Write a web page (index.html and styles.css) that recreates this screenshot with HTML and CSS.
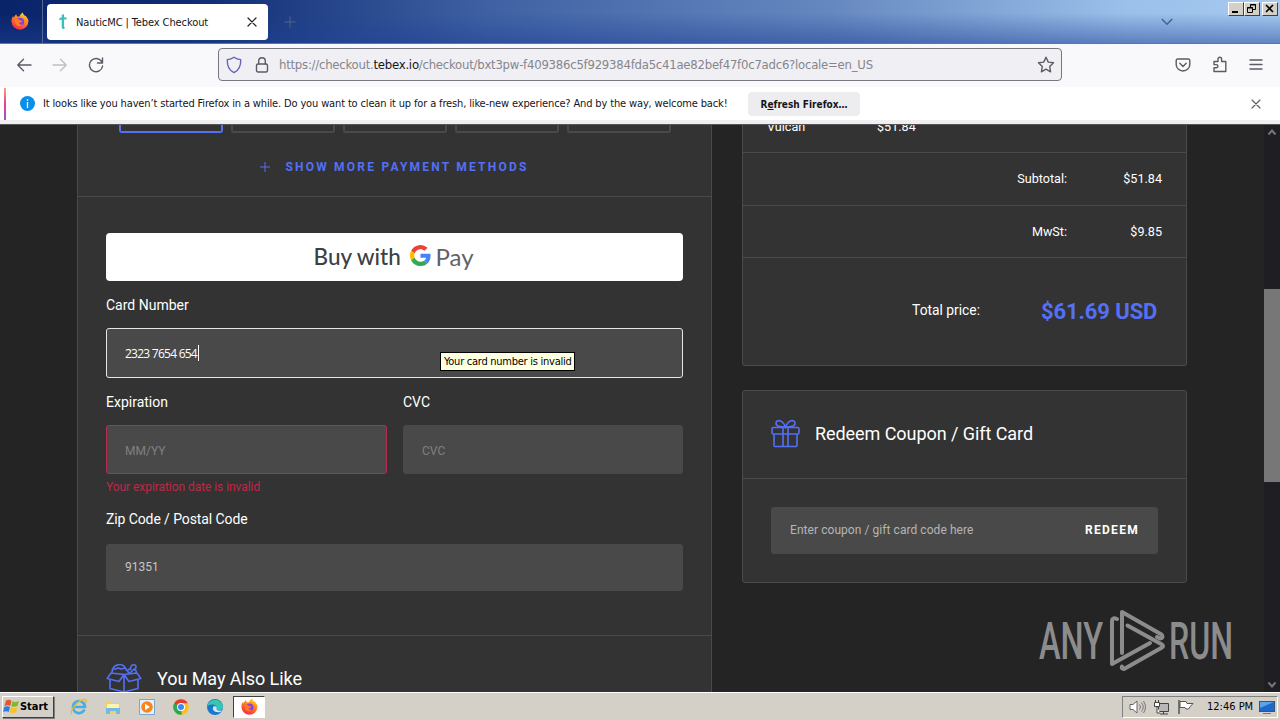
FILE: index.html
```html
<!DOCTYPE html>
<html lang="en">
<head>
<meta charset="utf-8">
<title>NauticMC | Tebex Checkout</title>
<link rel="stylesheet" href="styles.css">
</head>
<body>
<svg width="0" height="0" class="defs">
  <defs>
    <linearGradient id="flame" x1="0.8" y1="0" x2="0.3" y2="1"><stop offset="0" stop-color="#ffe226"/><stop offset=".4" stop-color="#ff8a1e"/><stop offset="1" stop-color="#f5264e"/></linearGradient>
    <symbol id="firefox" viewBox="0 0 16 16">
      <path fill="url(#flame)" d="M8 15.700a7.500 7.500 0 0 1-7.600-7.200C.3 6.500 1 4.800 2 3.600c0 .7.2 1.200.5 1.600.5-1.600 1.500-2.700 2.300-3.300 0 .8.300 1.500.7 2h2c.8-1.700 1.700-2.900 3.100-3.500 0 1.300.7 2 1.700 2.900 1.100 0 1.800 1.300 1.900 2 .7 0 1.300 1.500 1.300 3.200A7.500 7.500 0 0 1 8 15.700Z"/>
      <circle cx="8.200" cy="8.700" r="3.500" fill="#8a3fe0"/>
      <path fill="#ff7a22" d="M3.400 6.300c1.600-.5 3 0 4.100.9 1 .7 1.800.6 2.600.5-.5 1.500-2.200 1.500-2.800 2.200-.5.600 1 1.700 2.900.7-1 2.200-4.500 2.500-6 .2-.9-1.400-1-3-.8-4.500Z"/>
    </symbol>
  </defs>
</svg>

<div class="tabbar">
  <div class="pinned"><svg width="18" height="18"><use href="#firefox"/></svg></div>
  <div class="tab">
    <svg class="favicon" width="10" height="16" viewBox="0 0 10 16"><path d="M3.700 1 6 0v3.200L8.500 3.400v2L6 5.500V12c0 1 .5 1.300 1.300 1.200L5.800 15c-1.500 0-2.100-.7-2.100-2.300v-7L1 6l.8-2.200 1.900-.3Z" fill="#35c3b9"/></svg>
    <span class="tab-title">NauticMC | Tebex Checkout</span>
    <svg width="10" height="10" viewBox="0 0 10 10" class="ln dark"><path d="m1 1 8 8M9 1 1 9"/></svg>
  </div>
  <svg class="newtab" width="12" height="12" viewBox="0 0 12 12"><path d="M6 .5v11M.5 6h11"/></svg>
  <svg class="alltabs" width="12" height="8" viewBox="0 0 12 8"><path d="m.8 1 5.200 5.200L11.200 1"/></svg>
  <div class="winbtns">
    <span class="wb"><svg width="13" height="11" viewBox="0 0 13 11"><path d="M3 9h6" stroke="#000" stroke-width="2"/></svg></span>
    <span class="wb"><svg width="13" height="11" viewBox="0 0 13 11"><path d="M5.500 4V1.500h5v5H8M5 2h6M2.500 4.500h5v5h-5zM2 5h6" fill="none" stroke="#000"/></svg></span>
    <span class="wb last"><svg width="13" height="11" viewBox="0 0 13 11"><path d="m3 2 7 7M10 2 3 9" stroke="#000" stroke-width="1.600"/></svg></span>
  </div>
</div>

<div class="toolbar">
  <div class="nav">
    <svg width="16" height="16" viewBox="0 0 16 16" class="ln"><path d="M15 8H2M7.500 2.300 1.800 8l5.700 5.700"/></svg>
    <svg width="16" height="16" viewBox="0 0 16 16" class="ln faded"><path d="M1 8h13M8.500 2.300 14.200 8l-5.700 5.700"/></svg>
    <svg width="16" height="16" viewBox="0 0 16 16" class="ln"><path d="M13.600 4.500A6.600 6.600 0 1 0 14.600 9M14.500 1v5h-5"/></svg>
  </div>
  <div class="urlbar">
    <svg width="16" height="18" viewBox="0 0 16 18" class="ln shield"><path d="M8 1.200c2 1.500 4.200 2.200 6.700 2.400C15 9.500 13 14.200 8 16.700 3 14.200 1 9.500 1.300 3.600 3.800 3.400 6 2.700 8 1.200Z"/></svg>
    <svg class="ln lock" width="14" height="18" viewBox="0 0 14 18"><rect x="1.500" y="8" width="11" height="8" rx="1.500"/><path d="M3.700 8V5a3.300 3.300 0 0 1 6.600 0v3"/></svg>
    <span class="url">https://checkout.<b>tebex.io</b>/checkout/bxt3pw-f409386c5f929384fda5c41ae82bef47f0c7adc6?locale=en_US</span>
    <svg width="18" height="17" viewBox="0 0 18 17" class="ln star"><path d="m9 1.200 2.300 4.900 5.200.7-3.800 3.700.9 5.300L9 13.200l-4.600 2.600.9-5.300L1.500 6.800l5.200-.7Z"/></svg>
  </div>
  <div class="tools">
    <svg width="16" height="16" viewBox="0 0 16 16" class="ln"><path d="M2.500 2h11a1.300 1.300 0 0 1 1.300 1.300V7.500a6.800 6.500 0 0 1-13.600 0V3.300A1.300 1.300 0 0 1 2.500 2ZM4.800 6.300 8 9.400l3.200-3.100"/></svg>
    <svg width="16" height="17" viewBox="0 0 16 17" class="ln"><path d="M2 5.500h4V3a1.800 1.800 0 0 1 3.600 0v2.500h4.200v10H2v-3.700h2.300a1.500 1.500 0 0 0 0-3.200H2Z"/></svg>
    <svg width="14" height="14" viewBox="0 0 14 14" class="ln"><path d="M1 2h12M1 6.500h12M1 11h12"/></svg>
  </div>
</div>

<div class="notice">
  <span class="stripe"></span>
  <svg width="15" height="15" viewBox="0 0 15 15"><circle cx="7.500" cy="7.500" r="7.500" fill="#0a8fe8"/><path d="M7.500 3.200v1.600M7.500 6v6" stroke="#fff" stroke-width="1.300"/></svg>
  <span class="notice-text">It looks like you haven’t started Firefox in a while. Do you want to clean it up for a fresh, like-new experience? And by the way, welcome back!</span>
  <span class="refresh">R<u>e</u>fresh Firefox…</span>
  <svg class="ln notice-x" width="10" height="10" viewBox="0 0 10 10"><path d="m1 1 8 8M9 1 1 9"/></svg>
</div>

<div class="page">
  <main class="card checkout">
    <div class="methods"><i class="on"></i><i></i><i></i><i></i><i></i></div>
    <div class="more"><svg width="10" height="10" viewBox="0 0 10 10"><path d="M5 0v10M0 5h10" stroke="#5470f5"/></svg><span>SHOW MORE PAYMENT METHODS</span></div>
    <section class="form">
      <div class="gpay">
        <span class="buy">Buy with</span>
        <svg width="21" height="21" viewBox="0 0 48 48"><path fill="#ea4335" d="M24 9.500c3.500 0 6.700 1.200 9.200 3.600l6.900-6.900A24 24 0 0 0 2.600 13.200l8 6.200C12.400 13.700 17.700 9.500 24 9.500Z"/><path fill="#4285f4" d="M47 24.500c0-1.600-.2-3-.4-4.500H24v9h12.900a11 11 0 0 1-4.700 7.200l7.700 6C44.400 38 47 32 47 24.500Z"/><path fill="#fbbc05" d="M10.500 28.600a14 14 0 0 1 0-9.200l-8-6.200a24 24 0 0 0 0 21.600Z"/><path fill="#34a853" d="M24 48c6.500 0 12-2.100 15.900-5.800l-7.700-6c-2.200 1.500-4.900 2.300-8.200 2.300-6.300 0-11.600-4.200-13.500-9.900l-8 6.200A24 24 0 0 0 24 48Z"/></svg>
        <span class="pay">Pay</span>
      </div>
      <label class="l1"><span>Card Number</span></label>
      <div class="input focus"><span class="num">2323 7654 654</span><i class="caret"></i></div>
      <div class="pair">
        <div><label><span>Expiration</span></label><div class="input error"><span class="ph1">MM/YY</span></div></div>
        <div><label><span>CVC</span></label><div class="input"><span class="ph2">CVC</span></div></div>
      </div>
      <p class="errmsg"><span>Your expiration date is invalid</span></p>
      <label class="l2"><span>Zip Code / Postal Code</span></label>
      <div class="input zip"><span>91351</span></div>
    </section>
    <section class="also">
      <svg width="36" height="32" viewBox="0 0 36 32"><g fill="none" stroke="#5470f5" stroke-width="1.600" stroke-linejoin="round"><path d="M5 10 1.200 15.500 13 18.500l5-7 5 7 11.800-3L31 10l-13 1.500ZM18 12v17M4 17v8.500L18 29l14-3.500V17"/><path d="M6 9.500C6 4 10 1.500 14 1.500c3 0 6 2.500 6.500 6.500M8 6.500l4-1.500 3 1 4-1M23 10.500c-2.500-3-1-5 1.500-4C24 3 26.500 1 29 2c2 1.500 1 4.500-1.500 4.500 3 0 3 2 2.500 3.500M27.500 6.500l-4 4"/></g></svg>
      <h2>You May Also Like</h2>
    </section>
  </main>

  <aside>
    <div class="card summary">
      <div class="row item"><span class="name">Vulcan</span><span class="price">$51.84</span></div>
      <div class="row"><span class="s1">Subtotal:</span><span class="amt">$51.84</span></div>
      <div class="row tax"><span class="s2">MwSt:</span><span class="amt">$9.85</span></div>
      <div class="row total"><span class="s3">Total price:</span><strong>$61.69 USD</strong></div>
    </div>
    <div class="card coupon">
      <div class="coupon-head">
        <svg width="29" height="29" viewBox="0 0 29 29"><g fill="none" stroke="#5470f5" stroke-width="1.600"><rect x="1" y="8.500" width="27" height="6.500" rx="1.200"/><path d="M3 15v11.500a1 1 0 0 0 1 1h21a1 1 0 0 0 1-1V15M12 8.500v19M17 8.500v19M14.500 8C10 8 4.500 7.500 5 4s6.500-4 9.500 4C17.500 0 23.500.5 24 4s-5 4-9.500 4Z"/></g></svg>
        <h2>Redeem Coupon / Gift Card</h2>
      </div>
      <div class="coupon-box"><span class="hint">Enter coupon / gift card code here</span><span class="redeem">REDEEM</span></div>
    </div>
  </aside>

  <div class="scrollbar">
    <svg width="10" height="7" viewBox="0 0 10 7"><path d="m1.500 5.500 3.500-4 3.500 4"/></svg>
    <i></i>
    <svg width="10" height="7" viewBox="0 0 10 7"><path d="m1.500 1.500 3.500 4 3.500-4"/></svg>
  </div>

  <div class="tooltip"><span>Your card number is invalid</span></div>
  <svg class="watermark" width="200" height="70" viewBox="0 0 200 70">
    <g fill="#8c8c8c" font-family="Roboto, sans-serif" font-weight="500" font-size="51"><text x="4" y="54" textLength="64" lengthAdjust="spacingAndGlyphs">ANY</text><text x="134" y="54" textLength="64" lengthAdjust="spacingAndGlyphs">RUN</text></g>
    <g fill="none" stroke="#8c8c8c" stroke-width="4" stroke-linecap="round" stroke-linejoin="round"><path d="M82 14q-5-2-5 2v43l38-21"/><path d="M87 48V7l39.500 22.500q2.500 3.500-1.500 4l-3-1.500"/><path d="M92.500 20.500 127 39.500q2 1.500 0 3L89 64q-3 0-2-2.500"/></g>
  </svg>
</div>

<div class="taskbar">
  <div class="start"><svg width="17" height="16" viewBox="0 0 17 16"><path d="M3 1.500q3-1.500 5.500.3L7.300 7Q4.500 5.500 1.500 7Z" fill="#e8542c"/><path d="M9.500 2.300q3 1.300 6.500-.3L14.500 7q-3 1.500-6.200.3Z" fill="#7fba2c"/><path d="M1.200 8q3-1.400 5.800 0L5.700 13q-2.500-1.500-5.500 0Z" fill="#2f7be0"/><path d="M8 8.300q3 1.500 6.300 0L13 13.300q-3 1.500-6.200 0Z" fill="#f8c320"/></svg><span>Start</span></div>
  <div class="apps">
    <svg width="18" height="18" viewBox="0 0 18 18"><path d="M14.500 11.500A6 6 0 1 1 15 9H4" fill="none" stroke="#45aee3" stroke-width="2.600"/><path d="M2 16C-1 13 9 1 15 1.500c2 .3 1.500 2.500.5 4" fill="none" stroke="#edb832" stroke-width="1.300"/></svg>
    <svg width="18" height="18" viewBox="0 0 18 18"><path d="M2 3h5l1 2h8v10H2Z" fill="#efcf68"/><path d="M3 6h12v5H3Z" fill="#fff3b0"/><path d="M2 10h14v6h-4v-3H6v3H2Z" fill="#71bce0"/></svg>
    <svg width="18" height="18" viewBox="0 0 18 18"><path d="M1.500 1.500h15v15h-15Z" fill="#e6f0f8" stroke="#79a7ce"/><circle cx="9" cy="9" r="5.800" fill="#f6861b"/><path d="m7 5.700 5 3.300-5 3.300Z" fill="#fff"/></svg>
    <svg width="18" height="18" viewBox="0 0 18 18"><circle cx="9" cy="9" r="7.800" fill="#fbc116"/><path d="M2.200 5.200A7.800 7.800 0 0 1 15.800 5.200H9L5.700 11Z" fill="#e33b2e"/><path d="M2.200 5.200 9 9l.8 7.800A7.800 7.800 0 0 1 2.200 5.200Z" fill="#2da94f"/><circle cx="9" cy="9" r="4" fill="#fff"/><circle cx="9" cy="9" r="3" fill="#4285f4"/></svg>
    <svg width="18" height="18" viewBox="0 0 18 18"><circle cx="9" cy="9" r="8" fill="#1878cf"/><path d="M1.300 8A8 8 0 0 1 17 8.500c.2 4-5 4.500-6.500 2.500 1-2-.5-4.500-4-4.500-2 0-4 .5-5.200 1.500Z" fill="#38c6b0"/><path d="M10.500 11c1-2-1-3.500-3-2.500-2 3 .5 6.500 7 5.500l1.500-2c-2 1.200-5 .7-5.500-1Z" fill="#d4e8f0"/></svg>
    <span class="active"><svg width="17" height="17"><use href="#firefox"/></svg></span>
  </div>
  <div class="tray">
    <svg width="17" height="16" viewBox="0 0 17 16"><path d="M1 5.500h3L8 2v12l-4-3.500H1Z" fill="#fff" stroke="#666"/><path d="M10.500 5.500q2 2.500 0 5M12.500 3.500q3.500 4.500 0 9M14.500 2q4 6 0 12" fill="none" stroke="#777"/></svg>
    <svg width="17" height="16" viewBox="0 0 17 16"><path d="M5.500 4.500h10v8h-10ZM7 15h8M10.500 12.500V15" fill="#b8b8b8" stroke="#444"/><path d="M1.500 3.500h5v4h-5ZM2.500 1v2M5.500 1v2M4 7.500V14h3" fill="#fff" stroke="#444"/></svg>
    <svg width="17" height="16" viewBox="0 0 17 16"><path d="M2 1v14" stroke="#555" stroke-width="1.500"/><path d="M3 2.500h6l1 2h6q-3 3-4.500 5.500H9L8 8.500H3Z" fill="#fff" stroke="#555"/></svg>
    <span class="clock">12:46 PM</span>
    <svg width="16" height="16" viewBox="0 0 16 16"><rect x=".5" y="2.500" width="15" height="10" fill="#1d69c9" stroke="#38547c"/><path d="M1 3h14L1 9Z" fill="#5fa2e8"/><path d="M4 14.500h8" stroke="#777"/></svg>
  </div>
</div>
</body>
</html>
```
FILE: styles.css
```css
* { box-sizing: border-box; }
body { margin: 0; width: 1280px; height: 720px; overflow: hidden; display: flex; flex-direction: column; font-family: "DejaVu Sans Condensed", "DejaVu Sans", sans-serif; font-stretch: condensed; font-size: 11px; color: #15141a; background: #242424; }
svg { flex: none; display: block; }
span { white-space: nowrap; }
h2 { margin: 0; font-weight: 400; white-space: nowrap; }
.defs { position: absolute; }
.ln { fill: none; stroke: #5b5b66; stroke-width: 1.4; stroke-linejoin: round; stroke-linecap: round; }
.dark { stroke: #222; stroke-width: 1.2; }
.faded { stroke: #bfbfc9; }

.tabbar { height: 44px; flex: none; display: flex; align-items: center; background: linear-gradient(180deg, rgba(30,65,150,0) 30%, rgba(30,65,150,.5)), linear-gradient(90deg, #0a246a 0, #0f2c74 15%, #3f61a3 38%, #6688c0 65%, #9bc0ea 88%, #a6caf0); border-bottom: 1px solid #65749a; }
.pinned { width: 43px; height: 43px; padding: 12px 0 0 11px; border-right: 1px solid #536795; }
.tab { width: 221px; height: 36px; margin-left: 4px; padding: 0 11px; display: flex; align-items: center; background: #fff; border-radius: 4px; }
.tab-title { margin-left: 8px; flex: 1; letter-spacing: -.1px; padding-top: 2px; }
.newtab { margin-left: 16px; fill: none; stroke: #55657a; }
.alltabs { margin-left: auto; fill: none; stroke: #46648f; stroke-width: 1.6; }
.winbtns { display: flex; align-self: flex-start; margin: 2px 2px 0 55px; }
.wb { width: 16px; height: 14px; background: #d4d0c8; border: 1px solid; border-color: #fff #404040 #404040 #fff; }
.wb.last { margin-left: 2px; }

.toolbar { height: 41px; flex: none; display: flex; align-items: center; background: #f9f9fb; padding: 0 17px 0 16px; }
.nav { width: 202px; display: flex; gap: 20px; }
.urlbar { width: 844px; height: 33px; display: flex; align-items: center; background: #f0f0f4; border: 1px solid #77777f; border-radius: 4px; padding: 0 6px 0 7px; }
.shield { stroke: #6664b8; }
.lock { margin-left: 13px; }
.url { flex: 1; margin-left: 10px; font-size: 13px; color: #85858c; letter-spacing: -.24px; }
.url b { font-weight: 400; color: #15141a; }
.tools { margin-left: auto; display: flex; align-items: center; gap: 21px; }

.notice { height: 39px; flex: none; display: flex; align-items: center; padding: 0 19px 0 4px; background: #fff; border-top: 2px solid #f9f9fb; border-bottom: 4px solid #efeff1; }
.stripe { width: 2px; height: 32px; margin-right: 14px; background: linear-gradient(#f4a477, #ea3c97, #9059d0); }
.notice-text { margin-left: 8px; width: 685px; letter-spacing: -.145px; }
.refresh { margin-left: 20px; width: 112px; height: 24px; line-height: 25px; text-align: center; background: #ededf0; border-radius: 4px; font-weight: 700; font-size: 10px; }
.notice-x { margin-left: auto; stroke-width: 1.1; }

.page { position: relative; height: 568px; flex: none; display: flex; overflow: hidden; background: #242424; font-family: Roboto, sans-serif; font-stretch: normal; color: #fff; padding-left: 77px; border-top: 1px solid #555; }
.card { background: #333; border: 1px solid #4a4a4a; }
.checkout { width: 635px; border-width: 0 1px; }
.methods { display: flex; gap: 8px; padding-left: 41px; }
.methods i { width: 104px; height: 8px; border: 2px solid #4a4a4a; border-top: 0; border-radius: 0 0 3px 3px; }
.methods .on { border-color: #5470f5; }
.more { height: 64px; border-bottom: 1px solid #4a4a4a; display: flex; justify-content: center; align-items: center; padding-top: 5px; gap: 15px; font-size: 12px; font-weight: 700; color: #5470f5; letter-spacing: 2.22px; }
.form { height: 439px; padding: 36px 28px 0; border-bottom: 1px solid #4a4a4a; font-size: 14px; }
.gpay { height: 48px; background: #fff; border-radius: 4px; display: flex; justify-content: center; align-items: center; color: #3c4043; font-size: 22.5px; padding: 0 2px 2px 0; }
.buy { font-family: Lato, sans-serif; font-weight: 500; width: 96px; }
.gpay svg { margin-bottom: 2px; }
.pay { font-family: Lato, sans-serif; font-size: 24px; color: #5f6368; margin-left: 5px; width: 38px; }
label { display: flex; align-items: center; height: 47px; }
.input { height: 49px; background: #494949; border: 1px solid #494949; border-radius: 3px; display: flex; align-items: center; padding: 2px 18px 0; font-size: 12px; color: #808080; }
.focus { height: 50px; border-color: #e6e6e6; color: #fff; padding-top: 0; }
.num { font-family: "Open Sans", sans-serif; letter-spacing: -.75px; }
.caret { width: 1px; height: 16px; background: #fff; margin-left: 1px; }
.error { border-color: #b72c50; }
.pair { display: grid; grid-template-columns: 281px 280px; gap: 16px; }
.errmsg { margin: 0; height: 26px; display: flex; align-items: center; color: #bd2948; font-size: 12px; letter-spacing: -.06px; }
label.l2 { height: 38px; letter-spacing: -.1px; }
.zip { height: 47px; margin-top: 6px; padding-top: 0; padding-bottom: 2px; color: #c6c6c6; }
.also { height: 90px; padding: 27px 28px 0; display: flex; gap: 15px; }
.also h2 { font-size: 18px; margin-top: 5px; letter-spacing: -.06px; }

aside { width: 445px; margin-left: 30px; font-size: 12.6px; }
.summary { height: 241px; border-top: 0; border-radius: 0 0 3px 3px; }
.row { height: 53px; display: flex; align-items: center; justify-content: flex-end; border-bottom: 1px solid #4a4a4a; padding: 0 24px 2px; }
.tax { height: 52px; padding-bottom: 0; }
.item { height: 28px; justify-content: flex-start; align-items: flex-start; }
.name { width: 110px; margin-top: -6px; }
.price { margin-top: -6px; }
.amt { width: 95px; text-align: right; }
.total { height: 107px; border: 0; padding: 0 28px 4px; }
.s3 { font-size: 13.8px; }
.total strong { font-size: 22px; color: #5470f5; margin-left: 61px; margin-top: 4px; width: 117px; white-space: nowrap; letter-spacing: -.1px; }
.coupon { height: 193px; margin-top: 24px; border-radius: 3px; }
.coupon-head { height: 88px; display: flex; align-items: center; gap: 15px; padding: 0 28px 2px; border-bottom: 1px solid #4a4a4a; }
.coupon-head h2 { font-size: 18px; letter-spacing: -.06px; }
.coupon-box { height: 47px; margin: 28px; display: flex; justify-content: space-between; align-items: center; padding: 0 19px 2px; background: #494949; border-radius: 3px; color: #b5b5b5; font-size: 12px; letter-spacing: .06px; }
.redeem { color: #fff; font-weight: 700; letter-spacing: 1.3px; }

.scrollbar { margin-left: auto; width: 16px; background: #1e1e23; display: flex; flex-direction: column; align-items: center; padding: 4px 0; }
.scrollbar i { width: 16px; height: 193px; background: #777; margin: 153px 0 auto; }
.scrollbar path { fill: none; stroke: #777; stroke-width: 2; }
.tooltip { position: absolute; left: 440px; top: 227px; width: 135px; height: 19px; background: #ffffe1; border: 1px solid #000; color: #000; font: 11px/18px "DejaVu Sans Condensed", "DejaVu Sans", sans-serif; padding-left: 3px; letter-spacing: -.26px; }
.watermark { position: absolute; left: 1035px; top: 480px; }

.taskbar { height: 28px; flex: none; display: flex; align-items: center; background: #d4d0c8; border-top: 1px solid #fff; color: #000; padding: 0 2px; }
.start { width: 52px; height: 22px; display: flex; align-items: center; border: 1px solid; border-color: #fff #404040 #404040 #fff; box-shadow: 1px 1px 0 #808080; font-weight: 700; }
.start span { letter-spacing: -.05px; }
.apps { display: flex; align-items: center; margin-left: 16px; gap: 16px; }
.active { width: 32px; height: 22px; background: #fff; border: 1px solid; border-color: #404040 #fff #fff #404040; display: grid; place-items: center; margin-left: -7px; }
.tray { margin-left: auto; width: 156px; height: 22px; display: flex; align-items: center; border: 1px solid; border-color: #808080 #fff #fff #808080; padding-left: 6px; gap: 7px; }
.clock { margin-left: 6px; width: 45px; }
```
